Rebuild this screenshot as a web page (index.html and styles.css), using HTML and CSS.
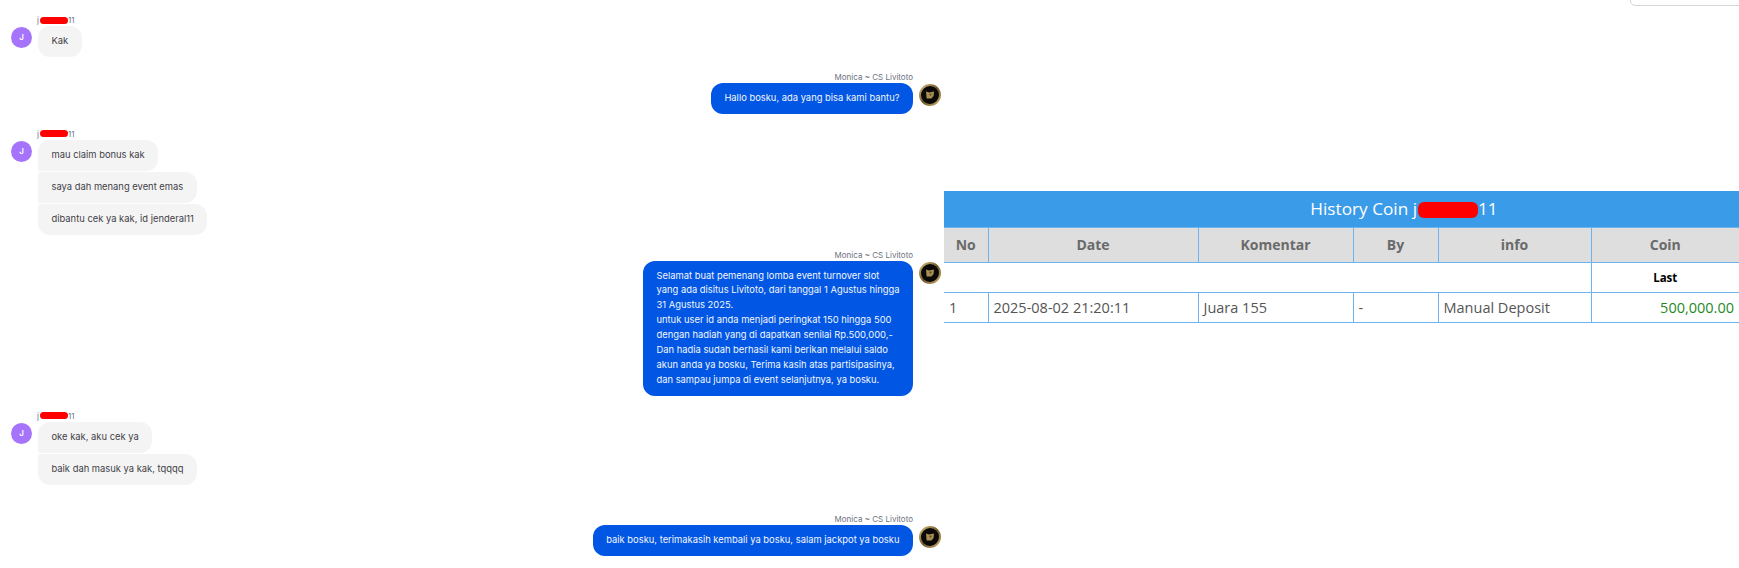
FILE: index.html
```html
<!DOCTYPE html>
<html lang="id">
<head>
  <meta charset="utf-8">
  <meta name="viewport" content="width=device-width, initial-scale=1.0">
  <title>History Coin</title>
  <link rel="stylesheet" href="styles.css">
</head>
<body>
  <div class="corner-box"></div>

  <div class="page">
    <!-- Chat -->
    <div class="chat">
      <div class="msg">
        <div class="name">j<span class="redact"></span>11</div>
        <div class="msg-row">
          <div class="avatar">J</div>
          <div class="stack">
            <div class="bubble">Kak</div>
          </div>
        </div>
      </div>

      <div class="msg agent">
        <div class="name">Monica ~ CS Livitoto</div>
        <div class="msg-row">
          <div class="stack">
            <div class="bubble">Hallo bosku, ada yang bisa kami bantu?</div>
          </div>
          <svg class="logo" viewBox="0 0 22 22"><use href="#cs-logo"></use></svg>
        </div>
      </div>

      <div class="msg">
        <div class="name">j<span class="redact"></span>11</div>
        <div class="msg-row">
          <div class="avatar">J</div>
          <div class="stack">
            <div class="bubble">mau claim bonus kak</div>
            <div class="bubble">saya dah menang event emas</div>
            <div class="bubble">dibantu cek ya kak, id jenderal11</div>
          </div>
        </div>
      </div>

      <div class="msg agent">
        <div class="name">Monica ~ CS Livitoto</div>
        <div class="msg-row">
          <div class="stack">
            <div class="bubble">Selamat buat pemenang lomba event turnover slot<br>yang ada disitus Livitoto, dari tanggal 1 Agustus hingga<br>31 Agustus 2025.<br>untuk user id anda menjadi peringkat 150 hingga 500<br>dengan hadiah yang di dapatkan senilai Rp.500,000,-<br>Dan hadia sudah berhasil kami berikan melalui saldo<br>akun anda ya bosku, Terima kasih atas partisipasinya,<br>dan sampau jumpa di event selanjutnya, ya bosku.</div>
          </div>
          <svg class="logo" viewBox="0 0 22 22"><use href="#cs-logo"></use></svg>
        </div>
      </div>

      <div class="msg">
        <div class="name">j<span class="redact"></span>11</div>
        <div class="msg-row">
          <div class="avatar">J</div>
          <div class="stack">
            <div class="bubble">oke kak, aku cek ya</div>
            <div class="bubble">baik dah masuk ya kak, tqqqq</div>
          </div>
        </div>
      </div>

      <div class="msg agent late">
        <div class="name">Monica ~ CS Livitoto</div>
        <div class="msg-row">
          <div class="stack">
            <div class="bubble">baik bosku, terimakasih kembali ya bosku, salam jackpot ya bosku</div>
          </div>
          <svg class="logo" viewBox="0 0 22 22"><use href="#cs-logo"></use></svg>
        </div>
      </div>
    </div>

    <!-- History coin -->
    <div class="history">
      <table class="coin-table">
        <colgroup>
          <col class="col-no"><col class="col-date"><col class="col-komentar">
          <col class="col-by"><col class="col-info"><col class="col-coin">
        </colgroup>
        <tr>
          <th class="title" colspan="6">History Coin j<span class="redact big"></span>11</th>
        </tr>
        <tr class="head">
          <th>No</th><th>Date</th><th>Komentar</th><th>By</th><th>info</th><th>Coin</th>
        </tr>
        <tr class="last-row">
          <td colspan="5"></td>
          <td class="last">Last</td>
        </tr>
        <tr class="data">
          <td>1</td>
          <td>2025-08-02 21:20:11</td>
          <td>Juara 155</td>
          <td>-</td>
          <td>Manual Deposit</td>
          <td class="coin">500,000.00</td>
        </tr>
      </table>
    </div>
  </div>

  <svg class="defs" width="0" height="0">
    <defs>
      <linearGradient id="gold" x1="0" y1="0" x2="1" y2="1">
        <stop offset="0" stop-color="#d9c07e"></stop>
        <stop offset="0.5" stop-color="#6f5729"></stop>
        <stop offset="1" stop-color="#c9ad69"></stop>
      </linearGradient>
      <g id="cs-logo">
        <circle cx="11" cy="11" r="10" fill="#0b0a08" stroke="url(#gold)" stroke-width="2"></circle>
        <path d="M7 7.6 L10 8.6 L15 7.4 L14.6 12 L12.4 14.6 L7.6 14.4 Z" fill="#a98f54"></path>
        <path d="M9.8 10 L13 9.6 L11.8 12.2 Z" fill="#6b572b"></path>
      </g>
    </defs>
  </svg>
</body>
</html>
```

FILE: styles.css
```css
* { box-sizing: border-box; }
body {
  margin: 0; padding: 0;
  background: #fff;
  font-family: "Inter", "Liberation Sans", sans-serif;
  overflow: hidden;
}
.page {
  display: flex;
  align-items: flex-start;
  height: 568px;
}
.defs { position: absolute; }

/* Kotak di pojok kanan atas */
.corner-box {
  position: absolute; top: -20px; left: 1630px;
  width: 130px; height: 26px;
  background: #fff;
  border: 1px solid #d6d6d6; border-radius: 5px;
}

/* Chat */
.chat {
  width: 944px;
  flex: none;
  padding: 0 3px 0 11px;
}
.msg { margin-top: 15px; }
.msg.late { margin-top: 29px; }
.name {
  height: 11px;
  padding-left: 26px;
  font-size: 8px; line-height: 11px;
  color: #6b7280;
  white-space: nowrap;
}
.msg-row { display: flex; align-items: flex-start; gap: 6px; }
.avatar {
  flex: none;
  width: 21px; height: 21px; margin-top: 1px;
  border-radius: 50%;
  background: #a674fb; color: #fff;
  font-size: 8px; font-weight: 600; line-height: 21px;
  text-align: center;
}
.logo { flex: none; width: 22px; height: 22px; margin-top: 1px; }
.stack {
  display: flex; flex-direction: column; align-items: flex-start;
  gap: 1px;
}
.bubble {
  padding: 8px 13.5px;
  border-radius: 12px;
  background: #f4f4f5; color: #3f3f46;
  font-size: 9.4px; line-height: 14.9px;
  white-space: nowrap;
}
.stack .bubble:not(:last-child) { border-bottom-left-radius: 3px; }
.stack .bubble:not(:first-child) { border-top-left-radius: 3px; }

.agent .name { padding: 0 28px 0 0; text-align: right; }
.agent .msg-row { justify-content: flex-end; }
.agent .stack { align-items: flex-end; }
.agent .bubble { background: #0157e3; color: #f2f6ff; }

/* Redaksi nama */
.redact {
  display: inline-block;
  width: 28px; height: 7px; margin-left: 1px;
  border-radius: 4px;
  background: #fe0000;
  vertical-align: -0.5px;
}
.redact.big {
  width: 60px; height: 16px;
  border-radius: 6px;
  vertical-align: -3px;
}

/* Tabel history */
.history { flex: 1; padding-top: 191px; min-width: 0; }
.coin-table {
  width: 100%;
  table-layout: fixed;
  border-collapse: collapse;
  font-family: "Open Sans", "Noto Sans", sans-serif;
  font-size: 14.5px;
  color: #555;
}
.col-no { width: 44px; }
.col-date { width: 210px; }
.col-komentar { width: 155px; }
.col-by { width: 85px; }
.col-info { width: 153px; }
.coin-table th, .coin-table td {
  border: 1px solid #6db3ee;
  padding: 0 5px;
}
.coin-table tr > :first-child { border-left: none; }
.coin-table tr > :last-child { border-right: none; }
.coin-table .title {
  height: 36px;
  padding-left: 130px;
  background: #3a9be8; color: #fff;
  border: none;
  font-size: 17.2px; font-weight: 400;
  text-align: center;
}
.head th {
  height: 35px;
  background: #dedede; color: #6a6a6a;
  font-size: 14px; font-weight: 700;
  text-align: center;
}
.last-row td { height: 30px; }
.coin-table .last {
  color: #000;
  font-size: 11.5px; font-weight: 700;
  text-align: center;
}
.data td { height: 30px; white-space: nowrap; }
.coin-table .coin { color: #1f8a1f; text-align: right; }
```
